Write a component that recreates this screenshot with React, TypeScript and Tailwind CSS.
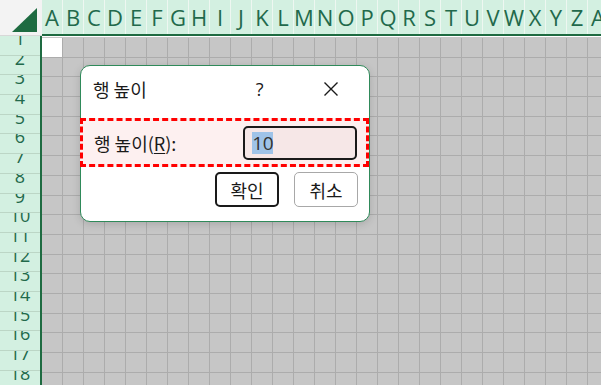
import React from "react";

const COLS = "ABCDEFGHIJKLMNOPQRSTUVWXYZA".split("");
const ROWS = Array.from({ length: 18 }, (_, i) => i + 1);

export default function App() {
  return (
    <div className="relative w-[601px] h-[385px] overflow-hidden bg-[#c6c6c6] font-['Open_Sans',sans-serif]">
      {/* column header */}
      <div className="flex h-[36px]">
        <div className="relative w-[42px] h-full shrink-0 bg-[#f3f3f3] border-b border-[#d8d8d8]">
          <svg className="absolute left-0 top-0" width="42" height="36" viewBox="0 0 42 36">
            <polygon points="12,32 37,32 37,8" fill="#1e6b41" />
          </svg>
        </div>
        <div className="flex flex-1 h-full bg-[#d3f0e1] border-b-2 border-[#1e6b41] overflow-hidden">
          {COLS.map((c, i) => (
            <div
              key={i}
              className="w-[21px] shrink-0 h-full border-r border-[#eef7f1] flex items-center justify-center text-[22px] leading-[34px] text-[#22694b]"
            >
              {c}
            </div>
          ))}
        </div>
      </div>
      {/* body */}
      <div className="flex">
        <div className="w-[42px] shrink-0 bg-[#d3f0e1] border-r-2 border-[#1e6b41] h-[349px]">
          {ROWS.map((r) => (
            <div
              key={r}
              className="h-[19.7px] border-b border-[#bcd6c6] overflow-hidden flex justify-center"
            >
              <span className="block text-[18px] leading-[18px] mt-[-7px] text-[#22694b]">{r}</span>
            </div>
          ))}
        </div>
        <div className="flex-1 overflow-hidden pt-[1px] border-t border-[#ffffff]">
          {ROWS.map((r) => (
            <div key={r} className="flex h-[19.7px]">
              {COLS.map((c, i) => (
                <div
                  key={i}
                  className={
                    r === 1 && i === 0
                      ? "w-[21px] shrink-0 h-full bg-white border-r border-b border-[#acacac]"
                      : "w-[21px] shrink-0 h-full border-r border-b border-[#acacac]"
                  }
                />
              ))}
            </div>
          ))}
        </div>
      </div>

      {/* dialog */}
      <div className="absolute left-[80px] top-[65px] w-[290px] h-[157px] bg-white border border-[#2f8a5a] rounded-[10px] shadow-[0_2px_8px_rgba(0,0,0,0.15)] font-['Noto_Sans_CJK_KR','Open_Sans',sans-serif] text-[#1a1a1a]">
        <div className="flex items-center h-[46px] pl-[12px]">
          <span className="text-[18px] leading-none">행 높이</span>
          <span className="ml-[109px] text-[18px] leading-none font-['Open_Sans',sans-serif]">?</span>
          <svg className="ml-[59px]" width="16" height="16" viewBox="0 0 16 16">
            <path d="M1.5 1.5 L14.5 14.5 M14.5 1.5 L1.5 14.5" stroke="#1a1a1a" strokeWidth="1.4" fill="none" />
          </svg>
        </div>
        <div className="mt-[6px] ml-[-1px] w-[289px] h-[49px] border-[3px] border-dashed border-[#ff0000] bg-[#fdf0f0] flex items-center pl-[11px]">
          <span className="text-[18px] leading-none">
            행 높이(<span className="underline underline-offset-2">R</span>):
          </span>
          <div className="ml-[67px] w-[114px] h-[34px] border-2 border-[#1a1a1a] rounded-[5px] bg-[#f6e7e7] flex items-center pl-[7px]">
            <span className="bg-[#9fc3e8] text-[#333333] text-[19px] leading-[22px] font-['Open_Sans',sans-serif] tracking-[-0.5px]">10</span>
          </div>
        </div>
        <div className="flex justify-end gap-[15px] pr-[11px] mt-[5px]">
          <button className="w-[64px] h-[35px] border-2 border-[#1a1a1a] rounded-[5px] bg-white text-[18px] leading-none">
            확인
          </button>
          <button className="w-[64px] h-[35px] border border-[#a8a8a8] rounded-[5px] bg-white text-[18px] leading-none">
            취소
          </button>
        </div>
      </div>
    </div>
  );
}
